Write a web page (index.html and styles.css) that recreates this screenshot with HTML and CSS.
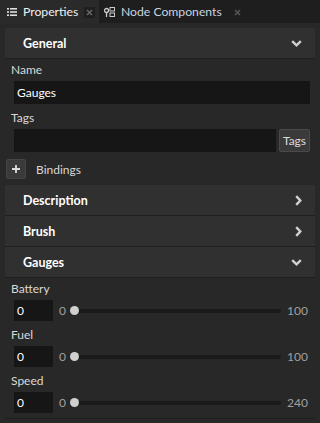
FILE: index.html
```html
<!DOCTYPE html>
<html lang="en">
<head>
  <meta charset="UTF-8" />
  <title>Properties</title>
  <link rel="stylesheet" href="styles.css">
</head>
<body>

  <div class="tabs">
    <div class="tab active">
      <svg class="tab-icon" width="10" height="8" viewBox="0 0 10 8">
        <rect x="0" y="0" width="2" height="1.6" fill="#ddd"/>
        <rect x="3" y="0" width="7" height="1.6" fill="#ddd"/>
        <rect x="0" y="3.2" width="2" height="1.6" fill="#ddd"/>
        <rect x="3" y="3.2" width="7" height="1.6" fill="#ddd"/>
        <rect x="0" y="6.4" width="2" height="1.6" fill="#ddd"/>
        <rect x="3" y="6.4" width="7" height="1.6" fill="#ddd"/>
      </svg>
      <span class="tab-label">Properties</span>
      <span class="tab-close dark">
        <svg width="7" height="7" viewBox="0 0 7 7"><path d="M1 1 L6 6 M6 1 L1 6" stroke="#666" stroke-width="1.6"/></svg>
      </span>
    </div>
    <div class="tab">
      <svg class="tab-icon" width="11" height="10" viewBox="0 0 11 10">
        <circle cx="2.5" cy="3.5" r="2" fill="none" stroke="#ccc" stroke-width="1.3"/>
        <rect x="1.9" y="5.5" width="1.3" height="4.5" fill="#ccc"/>
        <rect x="6" y="0.5" width="4.5" height="3.5" fill="none" stroke="#ccc" stroke-width="1"/>
        <rect x="6" y="6" width="4.5" height="3.5" fill="none" stroke="#ccc" stroke-width="1"/>
      </svg>
      <span class="tab-label">Node Components</span>
      <span class="tab-close">
        <svg width="7" height="7" viewBox="0 0 7 7"><path d="M1 1 L6 6 M6 1 L1 6" stroke="#555" stroke-width="1.6"/></svg>
      </span>
    </div>
  </div>

  <div class="panel">
    <div class="section-header">
      <span>General</span>
      <svg class="chevron" width="11" height="7" viewBox="0 0 11 7"><path d="M1.2 1.2 L5.5 5.3 L9.8 1.2" fill="none" stroke="#d0d0d0" stroke-width="2.4"/></svg>
    </div>

    <div class="fields">
      <div class="label">Name</div>
      <div class="input">Gauges</div>

      <div class="label">Tags</div>
      <div class="tags-row">
        <div class="input wide"></div>
        <button class="tags-btn">Tags</button>
      </div>
    </div>

    <div class="bindings">
      <button class="plus-btn">
        <svg width="8" height="8" viewBox="0 0 8 8"><path d="M4 0 V8 M0 4 H8" stroke="#ddd" stroke-width="1.8"/></svg>
      </button>
      <span>Bindings</span>
    </div>

    <div class="section-header">
      <span>Description</span>
      <svg class="chevron" width="7" height="11" viewBox="0 0 7 11"><path d="M1.2 1.2 L5.3 5.5 L1.2 9.8" fill="none" stroke="#d0d0d0" stroke-width="2.4"/></svg>
    </div>
    <div class="section-header">
      <span>Brush</span>
      <svg class="chevron" width="7" height="11" viewBox="0 0 7 11"><path d="M1.2 1.2 L5.3 5.5 L1.2 9.8" fill="none" stroke="#d0d0d0" stroke-width="2.4"/></svg>
    </div>
    <div class="section-header">
      <span>Gauges</span>
      <svg class="chevron" width="11" height="7" viewBox="0 0 11 7"><path d="M1.2 1.2 L5.5 5.3 L9.8 1.2" fill="none" stroke="#d0d0d0" stroke-width="2.4"/></svg>
    </div>

    <div class="fields gauges">
      <div class="label">Battery</div>
      <div class="slider-row">
        <div class="input small">0</div>
        <span class="range-min">0</span>
        <div class="track"><span class="thumb"></span></div>
        <span class="range-max">100</span>
      </div>

      <div class="label">Fuel</div>
      <div class="slider-row">
        <div class="input small">0</div>
        <span class="range-min">0</span>
        <div class="track"><span class="thumb"></span></div>
        <span class="range-max">100</span>
      </div>

      <div class="label">Speed</div>
      <div class="slider-row">
        <div class="input small">0</div>
        <span class="range-min">0</span>
        <div class="track"><span class="thumb"></span></div>
        <span class="range-max">240</span>
      </div>
    </div>
  </div>

</body>
</html>
```

FILE: styles.css
```css
* {
  box-sizing: border-box;
}

body {
  margin: 0;
  background-color: #282828;
  color: #dcdcdc;
  font-family: Lato, 'Noto Sans', sans-serif;
  font-size: 12px;
}

/* tab strip */
.tabs {
  display: flex;
  height: 23px;
  background-color: #1e1e1e;
}

.tab {
  display: flex;
  align-items: center;
  padding-left: 7px;
  color: #c8d4e0;
}

.tab.active {
  width: 99px;
  background-color: #2a2a2a;
  color: #f0f0f0;
}

.tab:not(.active) {
  padding-left: 5px;
}

.tab-icon {
  margin-right: 6px;
}

.tab-label {
  font-size: 12.2px;
}

.tab-close {
  display: flex;
  align-items: center;
  justify-content: center;
  width: 11px;
  height: 11px;
  margin-left: 10px;
  margin-top: 2px;
}

.tab-close.dark {
  background-color: #1f1f1f;
  margin-left: 6px;
}

/* panel */
.panel {
  padding: 5px 5px 0 5px;
}

.section-header {
  display: flex;
  align-items: center;
  justify-content: space-between;
  height: 31px;
  padding: 0 13px 0 18px;
  background-color: #303030;
  border-bottom: 1px solid #1f1f1f;
  color: #fff;
  font-weight: bold;
  font-size: 12.5px;
}

.fields {
  padding: 0 5px 0 6px;
}

.label {
  height: 22px;
  line-height: 22px;
  color: #d8d8d8;
}

.input + .label,
.tags-row + .label,
.slider-row + .label {
  margin-top: 3px;
}

.input {
  height: 23px;
  line-height: 23px;
  padding-left: 3px;
  margin-left: 3px;
  background-color: #161616;
  color: #fff;
}

.input.wide {
  flex: 1;
}

.tags-row {
  display: flex;
  align-items: center;
  gap: 3px;
}

.tags-btn {
  height: 23px;
  width: 31px;
  padding: 0;
  background-color: #3a3a3a;
  border: 1px solid #4a4a4a;
  border-radius: 2px;
  color: #dcdcdc;
  font-family: inherit;
  font-size: 12px;
}

.bindings {
  display: flex;
  align-items: center;
  height: 20px;
  margin: 7px 0 6px 1px;
  color: #d8d8d8;
}

.plus-btn {
  display: flex;
  align-items: center;
  justify-content: center;
  width: 20px;
  height: 20px;
  padding: 0;
  margin-right: 10px;
  background-color: #3a3a3a;
  border: 1px solid #454545;
  border-radius: 2px;
}

.gauges {
  padding-bottom: 5px;
  border-bottom: 1px solid #1f1f1f;
}

.slider-row {
  display: flex;
  align-items: center;
  height: 21px;
}

.input.small {
  width: 39px;
  height: 21px;
  line-height: 21px;
}

.range-min {
  margin-left: 6px;
  color: #a0a0a0;
}

.track {
  position: relative;
  flex: 1;
  height: 4px;
  margin: 0 6px 0 8px;
  background-color: #1a1a1a;
  border-radius: 2px;
}

.thumb {
  position: absolute;
  left: -4px;
  top: -3px;
  width: 9px;
  height: 9px;
  border-radius: 50%;
  background-color: #d0d0d0;
}

.range-max {
  margin-right: 2px;
  color: #a0a0a0;
}
```
